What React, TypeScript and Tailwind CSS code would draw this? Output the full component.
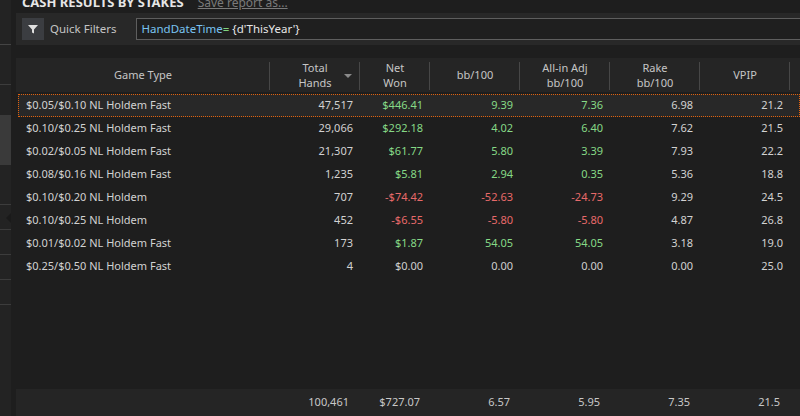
import React from "react"

interface StakeRow {
  game: string
  hands: string
  net: string
  bb: string
  allin: string
  rake: string
  vpip: string
}

const rows: StakeRow[] = [
  { game: "$0.05/$0.10 NL Holdem Fast", hands: "47,517", net: "$446.41", bb: "9.39", allin: "7.36", rake: "6.98", vpip: "21.2" },
  { game: "$0.10/$0.25 NL Holdem Fast", hands: "29,066", net: "$292.18", bb: "4.02", allin: "6.40", rake: "7.62", vpip: "21.5" },
  { game: "$0.02/$0.05 NL Holdem Fast", hands: "21,307", net: "$61.77", bb: "5.80", allin: "3.39", rake: "7.93", vpip: "22.2" },
  { game: "$0.08/$0.16 NL Holdem Fast", hands: "1,235", net: "$5.81", bb: "2.94", allin: "0.35", rake: "5.36", vpip: "18.8" },
  { game: "$0.10/$0.20 NL Holdem", hands: "707", net: "-$74.42", bb: "-52.63", allin: "-24.73", rake: "9.29", vpip: "24.5" },
  { game: "$0.10/$0.25 NL Holdem", hands: "452", net: "-$6.55", bb: "-5.80", allin: "-5.80", rake: "4.87", vpip: "26.8" },
  { game: "$0.01/$0.02 NL Holdem Fast", hands: "173", net: "$1.87", bb: "54.05", allin: "54.05", rake: "3.18", vpip: "19.0" },
  { game: "$0.25/$0.50 NL Holdem Fast", hands: "4", net: "$0.00", bb: "0.00", allin: "0.00", rake: "0.00", vpip: "25.0" },
]

// green / red / neutral like the tracker does it
function tone(v: string) {
  if (v.startsWith("-")) return "text-[#e86a6a]"
  if (/^\$?0\.00$/.test(v)) return "text-[#cfcfcf]"
  return "text-[#86d986]"
}

function HeaderCell({ w, children, sort }: { w: string; children: React.ReactNode; sort?: boolean }) {
  return (
    <div className={`${w} relative h-full flex items-center justify-center text-center leading-[15px]`}>
      <div className="mt-[-1px]">{children}</div>
      <div className="absolute right-0 top-[4px] bottom-[2px] w-px bg-[#474747]" />
      {sort && (
        <div className="absolute right-[8px] top-[16px] w-0 h-0 border-l-[4px] border-r-[4px] border-t-[4px] border-l-transparent border-r-transparent border-t-[#8a8a8a]" />
      )}
    </div>
  )
}

export default function App() {
  return (
    <div
      className="w-[800px] h-[416px] bg-[#1e1e1e] flex overflow-hidden text-[11px] text-[#d2d2d2]"
      style={{ fontFamily: '"Segoe UI", "Noto Sans", sans-serif' }}
    >
      {/* collapsed side panel */}
      <div className="w-[11px] shrink-0 bg-[#232323] flex flex-col">
        <div className="h-[45px] border-b border-[#444]" />
        <div className="h-[40px] border-b border-[#3c3c3c]" />
        <div className="h-[30px]" />
        <div className="h-[50px] bg-[#3a3a3a]" />
        <div className="h-[40px] border-b border-[#3c3c3c]" />
        <div className="h-[25px] border-b border-[#3c3c3c] relative">
          <div className="absolute right-0 top-[8px] w-0 h-0 border-t-[5px] border-b-[5px] border-r-[5px] border-t-transparent border-b-transparent border-r-[#1a1a1a]" />
        </div>
        <div className="h-[25px] border-b border-[#3c3c3c]" />
        <div className="h-[25px] border-b border-[#3c3c3c]" />
        <div className="h-[25px] border-b border-[#3c3c3c]" />
        <div className="flex-1" />
      </div>

      <div className="flex-1 flex flex-col pl-[5px] min-w-0">
        {/* title, scrolled half out of view */}
        <div className="h-[13px] overflow-hidden flex items-end pl-[6px] shrink-0">
          <span className="font-bold text-[13px] text-[#e6e6e6] leading-[16px] mb-[3px] whitespace-nowrap">
            CASH RESULTS BY STAKES
          </span>
          <span className="ml-[14px] text-[12px] text-[#7a7a7a] underline leading-[16px] mb-[2px] whitespace-nowrap">
            Save report as...
          </span>
        </div>

        {/* quick filters */}
        <div className="h-[32px] bg-[#282828] flex items-center pl-[6px] shrink-0">
          <div className="w-[22px] h-[22px] bg-[#3b3d41] flex items-center justify-center">
            <svg width="10" height="10" viewBox="0 0 10 10">
              <path d="M0 1h10L6 5.5V9.5L4 8.5V5.5Z" fill="#e0e0e0" />
            </svg>
          </div>
          <span className="ml-[6px] text-[11.5px] text-[#c4c4c4]">Quick Filters</span>
          <div className="ml-[19px] flex-1 h-[22px] border border-[#5e5e5e] border-r-0 bg-[#1f1f1f] flex items-center pl-[5px] text-[11.5px]">
            <span className="text-[#79c3f2]">HandDateTime</span>
            <span className="text-[#7fd47f]">=</span>
            <span className="text-[#e6e6e6] whitespace-pre"> {"{d'ThisYear'}"}</span>
          </div>
        </div>

        <div className="h-[13px] shrink-0" />

        {/* grid header */}
        <div className="h-[34px] bg-[#252525] flex shrink-0 text-[#c6c6c6]">
          <HeaderCell w="w-[254px]">Game Type</HeaderCell>
          <HeaderCell w="w-[90px]" sort>
            Total
            <br />
            Hands
          </HeaderCell>
          <HeaderCell w="w-[70px]">
            Net
            <br />
            Won
          </HeaderCell>
          <HeaderCell w="w-[90px]">bb/100</HeaderCell>
          <HeaderCell w="w-[90px]">
            All-in Adj
            <br />
            bb/100
          </HeaderCell>
          <HeaderCell w="w-[90px]">
            Rake
            <br />
            bb/100
          </HeaderCell>
          <HeaderCell w="w-[90px]">VPIP</HeaderCell>
          <div className="flex-1" />
        </div>

        {/* rows */}
        <div className="flex flex-col pt-[2px]">
          {rows.map((r, i) => (
            <div
              key={r.game}
              className={`h-[23px] flex items-center ml-[2px] border ${
                i === 0 ? "bg-[#282828] border-dotted border-[#e0620e]" : "border-transparent"
              }`}
            >
              <div className="w-[251px] pl-[7px] whitespace-nowrap">{r.game}</div>
              <div className="w-[90px] text-right pr-[7px]">{r.hands}</div>
              <div className={`w-[70px] text-right pr-[7px] ${tone(r.net)}`}>{r.net}</div>
              <div className={`w-[90px] text-right pr-[7px] ${tone(r.bb)}`}>{r.bb}</div>
              <div className={`w-[90px] text-right pr-[7px] ${tone(r.allin)}`}>{r.allin}</div>
              <div className="w-[90px] text-right pr-[7px]">{r.rake}</div>
              <div className="w-[90px] text-right pr-[7px]">{r.vpip}</div>
            </div>
          ))}
        </div>

        <div className="flex-1" />

        {/* totals */}
        <div className="h-[27px] bg-[#252525] flex items-center shrink-0 text-[#c8c8c8]">
          <div className="w-[254px]" />
          <div className="w-[90px] text-right pr-[11px]">100,461</div>
          <div className="w-[70px] text-right pr-[10px]">$727.07</div>
          <div className="w-[90px] text-right pr-[10px]">6.57</div>
          <div className="w-[90px] text-right pr-[10px]">5.95</div>
          <div className="w-[90px] text-right pr-[10px]">7.35</div>
          <div className="w-[90px] text-right pr-[10px]">21.5</div>
        </div>
      </div>
    </div>
  )
}
